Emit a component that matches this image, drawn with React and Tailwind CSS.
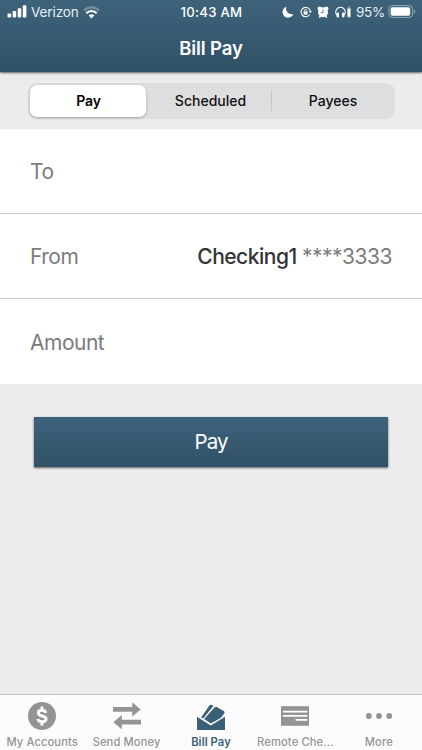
import React, { useState } from "react";

const SEGMENTS = ["Pay", "Scheduled", "Payees"];

function StatusBar() {
  return (
    <div className="flex h-6 items-center justify-between pl-[7px] pr-[6px] text-white">
      <div className="flex w-[140px] items-center">
        <svg className="mb-px h-[13px] w-[20px]" viewBox="0 0 20 13" fill="currentColor">
          <rect x="0.5" y="8.5" width="3.6" height="4" rx="0.9" />
          <rect x="5.6" y="6" width="3.6" height="6.5" rx="0.9" />
          <rect x="10.7" y="3.2" width="3.6" height="9.3" rx="0.9" />
          <rect x="15.8" y="0.3" width="3.6" height="12.2" rx="0.9" />
        </svg>
        <span className="ml-1 w-[49px] whitespace-nowrap text-[13.5px] leading-6 tracking-[-0.1px] text-[#e8f1f6]">Verizon</span>
        <svg className="ml-[3px] h-[13px] w-[17px]" viewBox="0 0 17 13" fill="none" stroke="currentColor" strokeWidth="2.2">
          <path d="M1 4.4a10.6 10.6 0 0 1 15 0" opacity="0.3" />
          <path d="M3.3 7.2a7.3 7.3 0 0 1 10.4 0" />
          <path d="M8.5 12.4 5.7 9.6a4 4 0 0 1 5.6 0z" fill="currentColor" stroke="none" />
        </svg>
      </div>
      <span className="whitespace-nowrap text-[13.2px] font-medium leading-6 tracking-[0.25px]">10:43 AM</span>
      <div className="flex w-[140px] items-center justify-end">
        <svg className="h-3 w-3" viewBox="0 0 12 12" fill="currentColor">
          <path d="M4.4.8a5.6 5.6 0 1 0 7 7.2A5.6 5.6 0 0 1 4.4.8z" />
        </svg>
        <svg className="ml-[6px] h-3 w-3" viewBox="0 0 12 12" fill="none" stroke="currentColor" strokeWidth="1.1">
          <path d="M10.4 5.2A4.7 4.7 0 1 0 9.6 8.8" />
          <path d="M8.8 5.2h3.2L10.4 7.3z" fill="currentColor" stroke="none" />
          <rect x="3.6" y="5.4" width="4" height="3.2" fill="currentColor" stroke="none" />
          <path d="M4.4 5.5V4.6a1.2 1.2 0 0 1 2.4 0v.9" strokeWidth="0.9" />
        </svg>
        <svg className="ml-[5px] h-3 w-3" viewBox="0 0 12 12" fill="currentColor">
          <circle cx="2.6" cy="2.4" r="2" />
          <circle cx="9.4" cy="2.4" r="2" />
          <circle cx="6" cy="6.2" r="5" />
          <path d="m2.2 11.6 1.4-1.8M9.8 11.6 8.4 9.8" stroke="currentColor" strokeWidth="1.5" />
          <path d="M6 3.4v3.1H3.8" fill="none" stroke="#3b6077" strokeWidth="0.8" />
        </svg>
        <svg className="ml-[6px] h-3 w-[17px]" viewBox="0 0 17 12" fill="currentColor">
          <path d="M2 9.2A4.7 4.7 0 1 1 9 9.2" fill="none" stroke="currentColor" strokeWidth="1.2" />
          <rect x="1.6" y="6.4" width="2.4" height="5" rx="1" />
          <rect x="7" y="6.4" width="2.4" height="5" rx="1" />
          <rect x="12" y="1.8" width="4" height="9.6" rx="0.8" opacity="0.5" />
          <rect x="12.9" y="3" width="2.2" height="7.6" />
          <rect x="13" y="0.6" width="2" height="1" opacity="0.5" />
        </svg>
        <span className="ml-[4px] whitespace-nowrap text-[13.5px] leading-6 tracking-[-0.25px] text-[#e8f1f6]">95%</span>
        <svg className="ml-[3px] mb-px h-[13px] w-[28px] shrink-0" viewBox="0 0 28 13">
          <rect x="0.8" y="0.6" width="23.8" height="11.8" rx="3.4" fill="none" stroke="#fff" strokeOpacity="0.45" />
          <rect x="2.6" y="2.3" width="19.6" height="8.4" rx="1.8" fill="#fff" />
          <path d="M25.9 4.4c1.8.7 1.8 3.5 0 4.2z" fill="#fff" fillOpacity="0.45" />
        </svg>
      </div>
    </div>
  );
}

function Field({ label, children }) {
  return (
    <div className="flex h-[85px] items-center justify-between border-b border-[#c9c9cb] px-[30px] pt-px text-[21px] tracking-[-0.5px] text-[#7b7b7b] last:border-b-0 last:pt-[2px]">
      <span>{label}</span>
      {children}
    </div>
  );
}

function AccountsIcon() {
  return (
    <svg className="h-7 w-7" viewBox="0 0 28 28">
      <circle cx="14" cy="14" r="14" fill="currentColor" />
      <path
        d="M17.9 10.8c-.5-1.8-2-2.5-3.9-2.5-2.2 0-3.7 1-3.7 2.7 0 4 7.8 2 7.8 6.1 0 1.8-1.7 2.7-4 2.7-2.2 0-3.8-.9-4.2-2.8M14 4.6v4M14 19.6v4"
        fill="none"
        stroke="#fff"
        strokeWidth="2.9"
      />
    </svg>
  );
}

function TransferIcon() {
  return (
    <svg className="h-7 w-7" viewBox="0 0 28 28" fill="currentColor">
      <path d="M0 5.1h19.2V.3L27.7 7.4l-8.5 7.1V9.7H0zM28 17.8H8.8V13L.3 20.2l8.5 7.1v-4.8H28z" />
    </svg>
  );
}

function BillPayIcon() {
  return (
    <svg className="h-7 w-7" viewBox="0 0 28 28" fill="currentColor">
      <path d="M0 14.7 13.8 23.4 28 14.7V28H0z" />
      <path d="M4 15.6 12.4 3.4c.6-.8 1.5-1 2.3-.5l1.7 1L6.2 16.4z" />
      <path d="M7.2 17 17.4 5.6c.6-.7 1.5-.9 2.3-.5l7 3.9c.9.5 1.2 1.6.6 2.4l-3.6 4.6-9.9 5.6z" />
    </svg>
  );
}

function CheckIcon() {
  return (
    <svg className="h-7 w-7" viewBox="0 0 28 28">
      <rect y="4.2" width="28" height="19.6" fill="currentColor" />
      <path d="M2 9.6h24.4M2 13.8h24.4M14.6 17.9h11.8" stroke="#fff" strokeWidth="1.8" />
    </svg>
  );
}

function MoreIcon() {
  return (
    <svg className="h-7 w-7" viewBox="0 0 28 28" fill="currentColor">
      <circle cx="3.8" cy="14" r="2.9" />
      <circle cx="14" cy="14" r="2.9" />
      <circle cx="24.2" cy="14" r="2.9" />
    </svg>
  );
}

const TABS = [
  { label: "My Accounts", icon: AccountsIcon },
  { label: "Send Money", icon: TransferIcon },
  { label: "Bill Pay", icon: BillPayIcon },
  { label: "Remote Che...", icon: CheckIcon },
  { label: "More", icon: MoreIcon },
];

export default function App() {
  const [segment, setSegment] = useState("Pay");
  const [tab, setTab] = useState("Bill Pay");

  return (
    <div className="flex h-[750px] w-[422px] flex-col overflow-hidden bg-[#ececec] font-['Inter','Liberation_Sans',sans-serif]">
      <header className="h-[72px] shrink-0 bg-linear-to-b from-[#3d637b] to-[#315166] shadow-[0_1px_2px_rgba(0,0,0,0.6)]">
        <StatusBar />
        <h1 className="text-center text-[18.5px] font-semibold leading-[48px] tracking-[-0.1px] text-white">Bill Pay</h1>
      </header>

      <div className="flex h-[57px] shrink-0 pl-[28px] pr-[27px] pt-[11px]">
        <div className="flex h-9 flex-1 rounded-[9px] bg-[#dedee0] p-[2px]">
          {SEGMENTS.map((name, i) => (
            <button
              key={name}
              onClick={() => setSegment(name)}
              className={
                segment === name
                  ? "mr-[3px] w-[116px] rounded-[7px] bg-white pb-[2px] text-[14px] font-semibold tracking-[-0.1px] text-black shadow-[0_1px_3px_rgba(0,0,0,0.25)]"
                  : "flex flex-1 items-center pb-px text-[14px] font-medium text-[#111]"
              }
            >
              {i === 2 && segment !== name && <span className="h-5 w-px bg-[#c6c6c9]" />}
              <span className="flex-1 pb-px pl-px text-center">{name}</span>
            </button>
          ))}
        </div>
      </div>

      <section className="shrink-0 bg-white">
        <Field label="To" />
        <Field label="From">
          <span className="whitespace-nowrap">
            <span className="font-medium text-[#333]">Checking1</span> ****3333
          </span>
        </Field>
        <Field label="Amount" />
      </section>

      <button className="mx-[34px] mt-[33px] h-[50px] shrink-0 bg-linear-to-b from-[#3d637b] to-[#315166] text-[20.5px] tracking-[-0.9px] text-white shadow-[0_1px_2px_rgba(0,0,0,0.6)]">
        Pay
      </button>

      <nav className="mt-auto grid h-14 shrink-0 grid-cols-5 border-t border-[#c4c4c4] bg-[#fcfcfc]">
        {TABS.map(({ label, icon: Icon }) => (
          <button
            key={label}
            onClick={() => setTab(label)}
            className={
              tab === label
                ? "flex flex-col items-center pt-[7px] text-[#3a6078]"
                : "flex flex-col items-center pt-[7px] text-[#949494] last:pr-[2px]"
            }
          >
            <Icon />
            <span
              className={
                tab === label
                  ? "mt-1 whitespace-nowrap text-[11.2px] font-semibold leading-4 tracking-[0.1px]"
                  : "mt-1 whitespace-nowrap text-[11.2px] font-medium leading-4 tracking-[0.1px]"
              }
            >
              {label}
            </span>
          </button>
        ))}
      </nav>
    </div>
  );
}
